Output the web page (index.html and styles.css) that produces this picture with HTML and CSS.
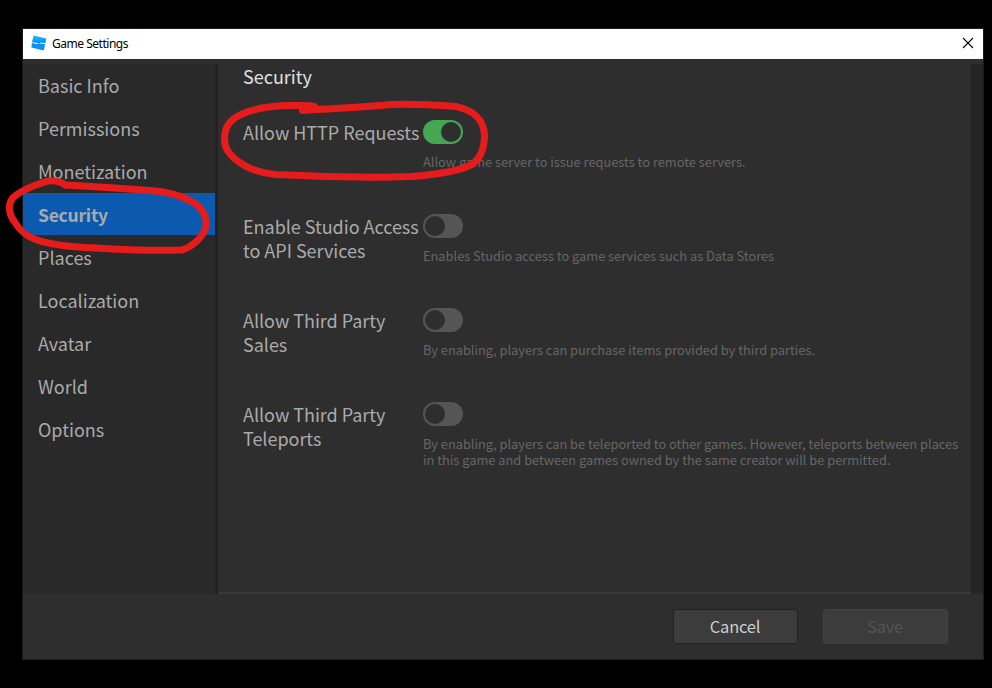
FILE: index.html
```html
<!DOCTYPE html>
<html lang="en">
<head>
<meta charset="utf-8">
<title>Game Settings</title>
<link rel="stylesheet" href="styles.css">
</head>
<body>
<div class="window">
  <header class="titlebar">
    <svg class="logo" width="16" height="16" viewBox="0 0 16 16">
      <defs><linearGradient id="g" x1="0" y1="0" x2="0" y2="1"><stop offset="0" stop-color="#16c5fb"/><stop offset="1" stop-color="#0387f5"/></linearGradient></defs>
      <path d="M2.6 .6 15.3 3.5 14.3 8.3 9.5 7.4 8.6 8.3 1 7.2Z" fill="url(#g)"/>
      <path d="M.9 8 6.2 9.1 7.4 8.2 14.1 9.2 12.8 15.4.4 12.4Z" fill="#0792f5"/>
    </svg>
    <span class="title">Game Settings</span>
    <svg class="close" width="12" height="12" viewBox="0 0 12 12"><path d="M1 1 11 11M11 1 1 11" stroke="#000" stroke-width="1.1"/></svg>
  </header>
  <div class="main">
    <nav class="sidebar">
      <a class="item"><span>Basic Info</span></a>
      <a class="item"><span>Permissions</span></a>
      <a class="item"><span>Monetization</span></a>
      <a class="item active"><span>Security</span></a>
      <a class="item"><span>Places</span></a>
      <a class="item"><span>Localization</span></a>
      <a class="item"><span>Avatar</span></a>
      <a class="item"><span>World</span></a>
      <a class="item"><span>Options</span></a>
    </nav>
    <section class="content">
      <h1>Security</h1>
      <div class="row">
        <div class="label">Allow HTTP Requests</div>
        <div class="field"><div class="toggle on"></div><p>Allow game server to issue requests to remote servers.</p></div>
      </div>
      <div class="row">
        <div class="label">Enable Studio Access<br>to API Services</div>
        <div class="field"><div class="toggle"></div><p>Enables Studio access to game services such as Data Stores</p></div>
      </div>
      <div class="row">
        <div class="label">Allow Third Party<br>Sales</div>
        <div class="field"><div class="toggle"></div><p>By enabling, players can purchase items provided by third parties.</p></div>
      </div>
      <div class="row">
        <div class="label">Allow Third Party<br>Teleports</div>
        <div class="field"><div class="toggle"></div><p>By enabling, players can be teleported to other games. However, teleports between places<br>in this game and between games owned by the same creator will be permitted.</p></div>
      </div>
    </section>
    <div class="track"></div>
  </div>
  <footer class="footer">
    <button class="btn cancel">Cancel</button>
    <button class="btn save" disabled>Save</button>
  </footer>
</div>
<svg class="marks" width="992" height="688" viewBox="0 0 992 688">
  <path transform="translate(.6 1)" d="M65 184C58 180 50 179 44 181C32 185 18 191 12 197C7 204 8 213 14 221C19 229 25 235 34 238C46 243 70 246 95 247C125 249 150 250 181 249C192 246 202 236 205 227C208 215 200 204 186 198C177 194 169 191 155 190C130 188 100 186 65 184"/>
  <path transform="translate(.5 .6)" d="M314 106C308 104 298 105 286 105C262 106 240 111 230 121C222 130 223 143 227 150C235 162 253 172 275 174C315 175 350 178 410 176C435 174 458 171 471 164C482 157 484 145 484 134C483 118 473 110 456 106C430 104 400 102 380 105C355 107 330 108 302 110"/>
</svg>
</body>
</html>
```
FILE: styles.css
```css
* { box-sizing: border-box; }
body {
  margin: 0;
  height: 688px;
  overflow: hidden;
  background: #000;
  padding: 29px 0 0 23px;
  font-family: "Noto Sans CJK SC", sans-serif;
  color: #aaa;
}
.window {
  width: 960px;
  height: 630px;
  background: #2e2e2e;
  display: flex;
  flex-direction: column;
  box-shadow: 0 0 0 1px #1a1a1a;
}
.titlebar {
  height: 30px;
  flex: none;
  background: #fff;
  display: flex;
  align-items: center;
  padding: 0 9px 0 8px;
}
.logo { margin-top: -2px; }
.title {
  margin-left: 5px;
  font: 12px/16px "Noto Sans", sans-serif;
  letter-spacing: -0.48px;
  color: #000;
}
.close { margin: -2px 0 0 auto; }
.main {
  height: 530px;
  margin-top: 5px;
  display: flex;
}
.sidebar {
  width: 195px;
  flex: none;
  background: #292929;
  border-right: 3px solid #222;
  display: flex;
  flex-direction: column;
  gap: 1px;
}
.item {
  height: 42px;
  padding: 9px 0 0 15px;
  font-size: 18px;
  line-height: 24px;
}
.active { padding-top: 10px; background: #0b5aaf; font-weight: 700; font-size: 17.5px; letter-spacing: -0.25px; }
.content {
  flex: 1;
  min-width: 0;
  padding: 0 0 0 25px;
  border-bottom: 2px solid #383838;
}
.content h1 {
  margin: 0 0 32px;
  font-size: 18px;
  line-height: 24px;
  font-weight: 400;
  color: #e0e0e0;
}
.row { display: flex; height: 94px; }
.label {
  width: 180px;
  flex: none;
  font-size: 18px;
  line-height: 24px;
  letter-spacing: -0.03px;
  white-space: nowrap;
}
.toggle {
  width: 40px;
  height: 24px;
  padding: 2px;
  border-radius: 12px;
  background: #555;
  display: flex;
}
.toggle::before {
  content: "";
  width: 20px;
  height: 20px;
  border-radius: 50%;
  background: #2e2e2e;
}
.toggle.on { background: #43a851; justify-content: flex-end; }
.field p {
  margin: 10px 0 0;
  font-size: 12.8px;
  line-height: 16px;
  letter-spacing: 0.01px;
  color: #666;
  white-space: nowrap;
}
.track { width: 12px; flex: none; background: #252525; }
.footer {
  display: flex;
  justify-content: flex-end;
  gap: 25px;
  padding: 15px 35px 0 0;
}
.btn {
  width: 125px;
  height: 35px;
  padding: 0 1px 2px 0;
  border: 1px solid #222;
  border-radius: 3px;
  background: #3c3c3c;
  font: 16.5px/24px "Noto Sans CJK SC", sans-serif;
  letter-spacing: -0.2px;
  color: #ccc;
}
.save { border-color: #414141; color: #555; }
.marks {
  position: absolute;
  left: 0;
  top: 0;
  fill: none;
  stroke: #e61c1c;
  stroke-width: 7;
  stroke-linecap: round;
  stroke-linejoin: round;
}
```
